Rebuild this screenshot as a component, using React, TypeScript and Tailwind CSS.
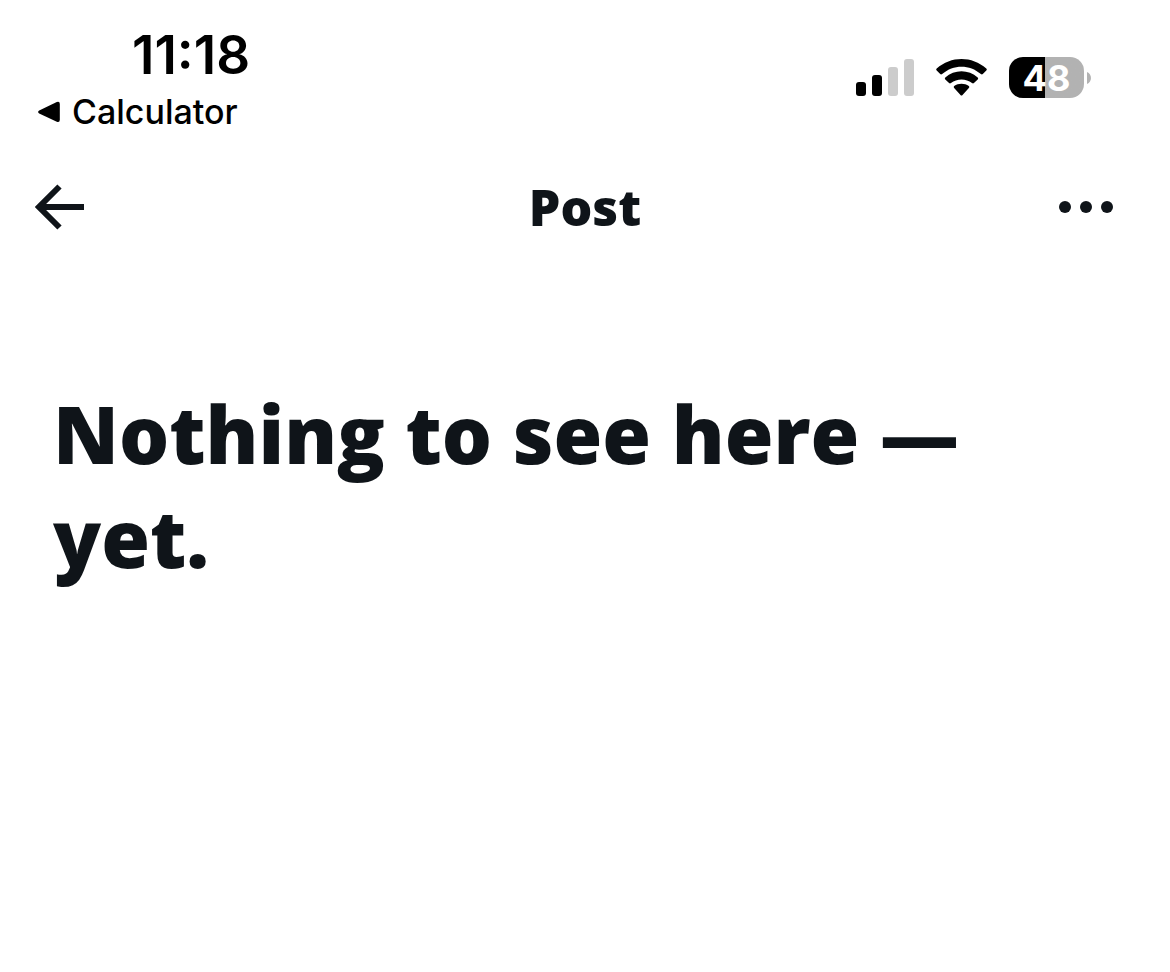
function SignalIcon() {
  return (
    <svg width="58" height="38" viewBox="0 0 58 38" role="img" aria-label="Signal: 2 of 4 bars">
      <rect x="0" y="23" width="10" height="14" rx="3" fill="#000" />
      <rect x="16" y="16" width="10" height="21" rx="3" fill="#000" />
      <rect x="32" y="8" width="10" height="29" rx="3" fill="#ccc" />
      <rect x="48" y="0" width="10" height="37" rx="3" fill="#ccc" />
    </svg>
  );
}

function WifiIcon() {
  return (
    <svg width="51" height="38" viewBox="0 0 50 38" preserveAspectRatio="none" role="img" aria-label="Wi-Fi">
      <path d="M.7 9.6C14.500-3.200 35.500-3.200 49.300 9.600Q50.300 10.600 49.300 11.600L45.900 15Q45 15.800 44 15C33.100 5.200 16.900 5.200 6 15Q5 15.800 4.100 15L.7 11.600Q-.3 10.600.7 9.600Z" />
      <path d="M9.100 18.400C18 10.200 32 10.200 40.900 18.400Q41.900 19.400 40.900 20.400L37.200 24Q36.300 24.800 35.300 24C29.500 19.200 20.500 19.200 14.700 24Q13.700 24.800 12.800 24L9.100 20.400Q8.100 19.400 9.100 18.400Z" />
      <path d="M17.800 27.100C21.900 23.900 28.100 23.900 32.200 27.100Q33.200 28 32.200 29L26 35.900Q25 36.900 24 35.900L17.800 29Q16.800 28 17.800 27.100Z" />
    </svg>
  );
}

function Battery() {
  return (
    <div className="flex items-center gap-[3px]" role="img" aria-label="Battery 48 percent">
      <div className="flex h-[41px] w-[75px] items-center justify-center rounded-[14px] bg-linear-to-r from-black from-48% to-[#b2b2b2] to-48% text-[36px] leading-none font-bold text-white">
        48
      </div>
      <svg width="4" height="12" viewBox="0 0 4 12" aria-hidden="true">
        <path d="M0 0C5.300 2 5.300 10 0 12Z" fill="#b2b2b2" />
      </svg>
    </div>
  );
}

function StatusBar() {
  return (
    <div className="flex items-start justify-between pt-[25px] pr-[79px] pl-[38px] font-[Inter,sans-serif] text-black">
      <div className="flex flex-col items-start">
        <time className="pl-[94px] text-[53px] leading-[60px] font-semibold">11:18</time>
        <a href="#calculator" className="flex items-center gap-3 text-[34px] leading-[54px] font-medium">
          <svg width="22" height="22" viewBox="0 0 22 22" aria-hidden="true">
            <path d="M1.200 9.400 18.800 1Q21.800 0 21.800 3V18.800Q21.800 21.800 18.800 20.800L1.200 12.600Q-1 11 1.200 9.400Z" />
          </svg>
          Calculator
        </a>
      </div>
      <div className="flex items-center gap-[22px] pt-8">
        <SignalIcon />
        <WifiIcon />
        <Battery />
      </div>
    </div>
  );
}

export default function App() {
  return (
    <div className="min-h-screen bg-white font-['Open_Sans',sans-serif] text-[#0f1419]">
      <StatusBar />
      <header className="grid h-[136px] grid-cols-[1fr_auto_1fr] items-center px-[35px]">
        <button type="button" aria-label="Back" className="justify-self-start">
          <svg width="50" height="46" viewBox="0 0 50 46" fill="none" stroke="currentColor" strokeWidth="6">
            <path d="M24.500 2.500 4 23 24.500 43.500M5 23H49" />
          </svg>
        </button>
        <h1 className="text-[50px] leading-[68px] font-extrabold">Post</h1>
        <button type="button" aria-label="More options" className="justify-self-end pr-[22px]">
          <svg width="54" height="12" viewBox="0 0 54 12" fill="currentColor">
            <circle cx="6" cy="6" r="6" />
            <circle cx="27" cy="6" r="6" />
            <circle cx="48" cy="6" r="6" />
          </svg>
        </button>
      </header>
      <main className="px-[53px] pt-[107px]">
        <h2 className="max-w-[960px] text-[79px] leading-[104px] font-extrabold">Nothing to see here — yet.</h2>
      </main>
    </div>
  );
}
